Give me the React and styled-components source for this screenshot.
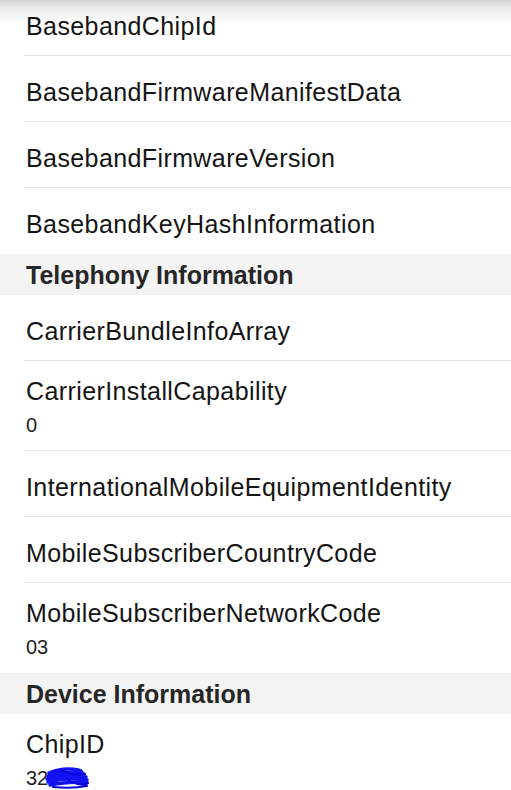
import React from 'react';
import styled, { createGlobalStyle } from 'styled-components';

const GlobalStyle = createGlobalStyle`
  html, body {
    margin: 0;
    padding: 0;
    background: #ffffff;
    overflow: hidden;
  }
  body {
    font-family: 'Liberation Sans', Arial, sans-serif;
    -webkit-font-smoothing: antialiased;
  }
`;

const Screen = styled.div`
  position: relative;
  width: 511px;
  height: 790px;
  overflow: hidden;
  background: #ffffff;
`;

/* shadow cast by the navigation bar that sits just above the crop */
const TopShade = styled.div`
  position: absolute;
  top: 0;
  left: 0;
  right: 0;
  height: 24px;
  background: linear-gradient(
    to bottom,
    rgba(0, 0, 0, 0.17) 0%,
    rgba(0, 0, 0, 0.08) 35%,
    rgba(0, 0, 0, 0) 100%
  );
  pointer-events: none;
`;

const List = styled.div`
  margin-top: -10px;
  display: flex;
  flex-direction: column;
`;

const SectionHeader = styled.div`
  background: #f4f4f4;
  padding: 6px 0 5px 26px;
  font-size: 25px;
  line-height: 30px;
  font-weight: 700;
  color: #262626;
`;

const Row = styled.div`
  margin-left: 24px;
  padding: ${(p) => (p.$double ? '15px 0 13px 2px' : '21px 0 14px 2px')};
  border-bottom: 1px solid ${(p) => (p.$last ? 'transparent' : '#e4e4e4')};
  display: flex;
  flex-direction: column;
`;

const Title = styled.div`
  font-size: 25px;
  line-height: 30px;
  color: #141414;
  letter-spacing: 0.4px;
  white-space: nowrap;
`;

const Value = styled.div`
  margin-top: 7px;
  font-size: 20px;
  line-height: 24px;
  color: #1e1e1e;
  display: flex;
  align-items: flex-start;
`;

const Scribble = styled.svg`
  width: 44px;
  height: 22px;
  margin-left: -3px;
  margin-top: 1px;
`;

function Redaction() {
  return (
    <Scribble viewBox="0 0 44 22">
      <path
        d="M4 6 C12 2 24 1 33 3 C37 4 38 6 36 7 M3 9 C14 5 27 5 39 7 M2 12 C12 9 27 8 41 10 M3 15 C14 12 28 11 42 13 M5 18 C15 16 29 14 42 16"
        fill="none"
        stroke="#1212f2"
        strokeWidth="3.4"
        strokeLinecap="round"
      />
      <path
        d="M16 4 C24 7 33 8 40 7 M22 12 C28 17 37 19 43 16 M8 20 C18 21 32 21 42 19"
        fill="none"
        stroke="#0808d8"
        strokeWidth="2.2"
        strokeLinecap="round"
      />
    </Scribble>
  );
}

const sections = [
  {
    title: null,
    rows: [
      { name: 'BasebandChipId' },
      { name: 'BasebandFirmwareManifestData' },
      { name: 'BasebandFirmwareVersion' },
      { name: 'BasebandKeyHashInformation' },
    ],
  },
  {
    title: 'Telephony Information',
    rows: [
      { name: 'CarrierBundleInfoArray' },
      { name: 'CarrierInstallCapability', value: '0' },
      { name: 'InternationalMobileEquipmentIdentity' },
      { name: 'MobileSubscriberCountryCode' },
      { name: 'MobileSubscriberNetworkCode', value: '03' },
    ],
  },
  {
    title: 'Device Information',
    rows: [{ name: 'ChipID', value: '32', redacted: true }],
  },
];

export default function App() {
  return (
    <>
      <GlobalStyle />
      <Screen>
        <List>
          {sections.map((section, si) => (
            <React.Fragment key={si}>
              {section.title && <SectionHeader>{section.title}</SectionHeader>}
              {section.rows.map((row, ri) => (
                <Row
                  key={row.name}
                  $double={row.value !== undefined}
                  $last={ri === section.rows.length - 1}
                >
                  <Title>{row.name}</Title>
                  {row.value !== undefined && (
                    <Value>
                      {row.value}
                      {row.redacted && <Redaction />}
                    </Value>
                  )}
                </Row>
              ))}
            </React.Fragment>
          ))}
        </List>
        <TopShade />
      </Screen>
    </>
  );
}
